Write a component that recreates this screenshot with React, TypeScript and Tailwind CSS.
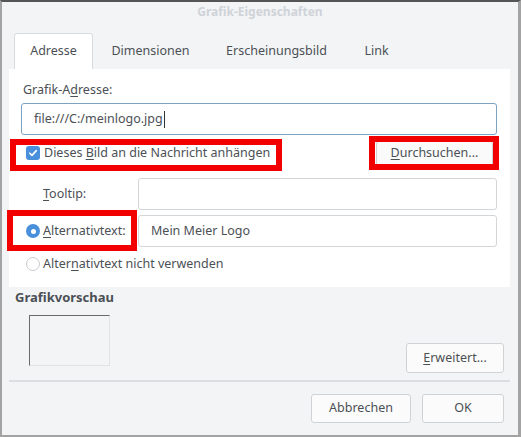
import React from "react";

const U = ({ children }: { children: React.ReactNode }) => (
  <span className="underline underline-offset-2 decoration-1">{children}</span>
);

function Checkbox() {
  return (
    <div className="w-[14px] h-[14px] rounded-[3px] bg-[#4a8fdc] flex items-center justify-center shrink-0">
      <svg width="10" height="10" viewBox="0 0 10 10">
        <path d="M1.8 5.2 L4 7.4 L8.3 2.6" fill="none" stroke="white" strokeWidth="1.6" strokeLinecap="round" strokeLinejoin="round" />
      </svg>
    </div>
  );
}

function Radio({ on }: { on: boolean }) {
  return on ? (
    <div className="w-[14px] h-[14px] rounded-full bg-[#4a8fdc] flex items-center justify-center shrink-0">
      <div className="w-[5px] h-[5px] rounded-full bg-white" />
    </div>
  ) : (
    <div className="w-[14px] h-[14px] rounded-full border border-[#c9ccd0] bg-white shrink-0" />
  );
}

export default function App() {
  return (
    <div
      className="relative w-[521px] h-[437px] overflow-hidden text-[12.5px] text-[#4b5055]"
      style={{ fontFamily: '"Noto Sans", "Open Sans", sans-serif' }}
    >
      <div className="w-[521px] h-[437px] bg-[#f3f4f6] border-l-2 border-r-[3px] border-b-2 border-t-2 border-l-[#a3a3a3] border-r-[#a3a3a3] border-b-[#a3a3a3] border-t-[#555] flex flex-col">
        {/* Title */}
        <div className="h-[31px] flex justify-center pt-[1px]">
          <span className="font-bold text-[12px] leading-[18px] text-[#cfd3d8]">Grafik-Eigenschaften</span>
        </div>
        {/* Tabs */}
        <div className="h-[36px] flex ml-[12px]">
          <div className="w-[79px] h-[36px] bg-white border border-b-0 border-[#d9dcdf] rounded-t-[3px] flex items-center justify-center">
            Adresse
          </div>
          <div className="w-[115px] flex items-center justify-center">Dimensionen</div>
          <div className="w-[137px] flex items-center justify-center">Erscheinungsbild</div>
          <div className="w-[63px] flex items-center justify-center">Link</div>
        </div>
        {/* Panel */}
        <div className="ml-[7px] w-[501px] h-[218px] bg-white flex flex-col">
          <div className="mt-[12px] ml-[14px] leading-[18px]">
            Grafik-A<U>d</U>resse:
          </div>
          <div className="mt-[4px] ml-[12px] w-[476px] h-[32px] border border-[#7ea3c2] rounded-[3px] flex items-center pl-[12px]">
            <span>file:///C:/meinlogo.jpg</span>
            <span className="ml-[1px] w-px h-[17px] bg-[#333]" />
          </div>
          <div className="h-[36px] flex items-center">
            <div className="ml-[17px] flex items-center gap-[4px]">
              <Checkbox />
              <span>
                Dieses <U>B</U>ild an die Nachricht anhängen
              </span>
            </div>
            <div className="ml-auto mr-[17px] w-[117px] h-[25px] border border-[#d0d3d6] rounded-[3px] bg-[#fafafa] flex items-center justify-center">
              <span>
                <U>D</U>urchsuchen...
              </span>
            </div>
          </div>
          <div className="mt-[7px] flex items-center">
            <div className="ml-[34px] w-[95px]">
              <U>T</U>ooltip:
            </div>
            <div className="w-[359px] h-[32px] border border-[#d3d6d9] rounded-[3px]" />
          </div>
          <div className="mt-[5px] flex items-center">
            <div className="ml-[17px] w-[112px] flex items-center gap-[3px]">
              <Radio on />
              <span>
                <U>A</U>lternativtext:
              </span>
            </div>
            <div className="w-[359px] h-[32px] border border-[#d3d6d9] rounded-[3px] flex items-center pl-[12px]">
              Mein Meier Logo
            </div>
          </div>
          <div className="mt-[8px] ml-[17px] flex items-center gap-[3px] leading-[18px]">
            <Radio on={false} />
            <span>
              Alter<U>n</U>ativtext nicht verwenden
            </span>
          </div>
        </div>
        {/* Bottom */}
        <div className="mt-[1px] ml-[13px] leading-[18px] font-bold text-[13px]">Grafikvorschau</div>
        <div className="flex items-start">
          <div className="mt-[9px] ml-[27px] w-[81px] h-[51px] border-l border-t border-l-[#6b6b6b] border-t-[#6b6b6b] border-r border-b border-r-[#e2e3e5] border-b-[#e2e3e5]" />
          <div className="ml-auto mr-[14px] mt-[37px] w-[98px] h-[30px] border border-[#d0d3d6] rounded-[3px] bg-[#fbfbfb] flex items-center justify-center">
            <span>
              <U>E</U>rweitert...
            </span>
          </div>
        </div>
        <div className="mt-[7px] ml-[7px] mr-[8px] h-[2px] bg-[#dcdfe2]" />
        <div className="mt-[12px] flex justify-end gap-[11px] mr-[14px]">
          <div className="w-[100px] h-[29px] border border-[#d0d3d6] rounded-[3px] bg-[#fbfbfb] flex items-center justify-center">
            Abbrechen
          </div>
          <div className="w-[82px] h-[29px] border border-[#d0d3d6] rounded-[3px] bg-[#fbfbfb] flex items-center justify-center">
            OK
          </div>
        </div>
      </div>
      {/* Red annotation boxes */}
      <div className="absolute left-[10px] top-[139px] w-[272px] h-[32px] border-[6px] border-[#f20000]" />
      <div className="absolute left-[369px] top-[136px] w-[130px] h-[34px] border-[6px] border-[#f20000]" />
      <div className="absolute left-[7px] top-[210px] w-[130px] h-[41px] border-[6px] border-[#f20000]" />
    </div>
  );
}
